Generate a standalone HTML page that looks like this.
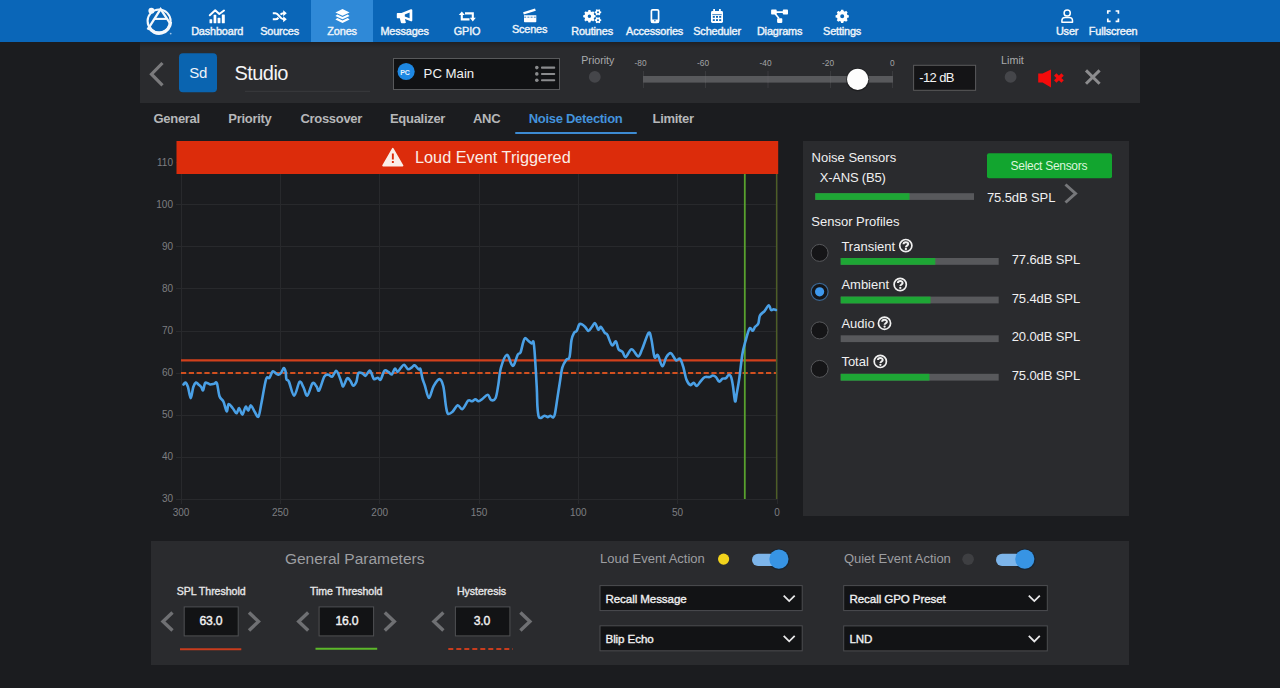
<!DOCTYPE html>
<html><head><meta charset="utf-8">
<style>
*{box-sizing:border-box;margin:0;padding:0}
html,body{width:1280px;height:688px;overflow:hidden;background:#1b1c1f;font-family:"Liberation Sans",sans-serif;color:#fff;position:relative}
.a{position:absolute}
#nav{left:0;top:0;width:1280px;height:42px;background:#0a66b8}
.nt{position:absolute;top:24.5px;width:80px;text-align:center;font-size:10.9px;line-height:13px;font-weight:normal;-webkit-text-stroke:0.4px #eef4fa;color:#eef4fa;letter-spacing:-0.15px;white-space:nowrap}
#hdr{left:140px;top:42px;width:1000px;height:61px;background:linear-gradient(#1f2023 0px,#25262a 3px,#2a2b2e 6px,#2a2b2e 100%)}
.tab{position:absolute;top:111px;font-size:13px;line-height:15px;font-weight:bold;color:#b6b7b9;white-space:nowrap;letter-spacing:-0.3px}
#rp{left:803px;top:141px;width:326px;height:375px;background:#2a2b2e}
#bp{left:151px;top:541px;width:978px;height:124px;background:#2a2b2e}
.rt{position:absolute;font-size:13px;line-height:15px;color:#f0f0f1;white-space:nowrap}
.bt{position:absolute;top:585px;font-size:10.6px;line-height:12px;font-weight:normal;-webkit-text-stroke:0.35px #e6e6e7;color:#e6e6e7;white-space:nowrap;letter-spacing:-0.05px}
.bv{position:absolute;top:614.2px;font-size:12.2px;line-height:14px;font-weight:normal;-webkit-text-stroke:0.4px #f2f2f3;color:#f2f2f3;white-space:nowrap;letter-spacing:-0.25px}
.st{position:absolute;font-size:11.6px;line-height:14px;font-weight:normal;-webkit-text-stroke:0.35px #f0f0f1;color:#f0f0f1;white-space:nowrap;letter-spacing:-0.1px}
</style></head><body>
<div id="nav" class="a">
<div class="a" style="left:310.6px;top:0;width:62.5px;height:42px;background:#2f89d7"></div>
<svg class="a" style="left:0;top:0" width="1280" height="42" viewBox="0 0 1280 42" fill="#fff" stroke="none">
 <!-- logo -->
 <g fill="none" stroke="#f4f8fc">
  <circle cx="159.1" cy="21" r="11.5" stroke-width="2.1"/>
  <path d="M149 27 A11.3 11.3 0 0 0 170.4 22" stroke-width="3.4"/>
  <path d="M147.6 29.6 L160.6 9.2 L170.4 23.8" stroke-width="2.3"/>
  <path d="M154.6 18.9 H166.6" stroke-width="2.1"/>
 </g>
 <circle cx="151.4" cy="10.8" r="3" fill="#f4f8fc"/>
 <circle cx="170.7" cy="33.6" r="0.9" fill="#9cc3ea"/>
 <!-- dashboard -->
 <path d="M209.8 15.2 L215.2 10.2 L219.3 14 L224 10.5" fill="none" stroke="#fff" stroke-width="2" stroke-linecap="round" stroke-linejoin="round"/>
 <rect x="209.5" y="19.2" width="2.7" height="4.1" rx="0.6"/>
 <rect x="213.6" y="14.8" width="2.7" height="8.5" rx="0.6"/>
 <rect x="217.6" y="17.8" width="2.8" height="5.5" rx="0.6"/>
 <rect x="221.8" y="14.5" width="3" height="8.8" rx="0.6"/>
 <!-- sources shuffle -->
 <g fill="none" stroke="#fff" stroke-width="2.1">
  <path d="M272.8 13.2 H275.4 C277.4 13.2 278 14.5 279.5 16.4 C281 18.3 281.8 19.3 283.6 19.3 H284.5"/>
  <path d="M272.8 19.3 H275.4 C277.2 19.3 277.8 18.5 278.4 17.6 M280.6 14.6 C281.2 13.7 282 13.2 283.6 13.2 H284.5"/>
 </g>
 <path d="M283.2 10.2 L286.8 13.2 L283.2 16.2Z M283.2 16.3 L286.8 19.3 L283.2 22.3Z"/>
 <!-- zones layers -->
 <path d="M342.5 9 L349.6 12.4 L342.5 15.8 L335.4 12.4Z"/>
 <path d="M337.3 14.6 L342.5 17.1 L347.7 14.6 L349.6 15.9 L342.5 19.3 L335.4 15.9Z"/>
 <path d="M337.3 18.1 L342.5 20.6 L347.7 18.1 L349.6 19.5 L342.5 22.9 L335.4 19.5Z"/>
 <!-- messages bullhorn -->
 <path d="M397 13 H401.5 L410.8 9.2 C411.6 9 412.3 9.3 412.3 10 V20.6 C412.3 21.3 411.6 21.6 410.8 21.3 L405 19 V19.2 L405.8 22.3 C406 23 405.4 23.2 404.8 23.2 H401.8 C401.3 23.2 401 22.9 400.9 22.4 L399.8 18.2 H397.6 C397 18.2 396.8 17.7 396.8 17.2 V13.8 C396.8 13.3 397 13 397.6 13Z M404.8 14.4 V16.6 L409.6 18.2 V12.6Z"/>
 <!-- gpio retweet -->
 <g fill="none" stroke="#fff" stroke-width="2.1">
  <path d="M461.8 14 V19.4 H469.5"/>
  <path d="M472.8 18.8 V13.4 H465"/>
 </g>
 <path d="M458.8 15 L461.8 11.4 L464.8 15Z M469.8 17.8 L472.8 21.6 L475.8 17.8Z"/>
 <!-- scenes clapper -->
 <path d="M524 15.3 H536.3 V21.4 C536.3 21.9 536 22.2 535.5 22.2 H524.8 C524.3 22.2 524 21.9 524 21.4Z"/>
 <path d="M524.2 17.2 H536.1" stroke="#0a66b8" stroke-width="0.8" stroke-dasharray="2 1.2"/>
 <path d="M523.1 12.2 L535 8.6 L535.8 10.8 L523.8 14.4Z"/>
 <!-- routines cogs -->
 <path fill-rule="evenodd" d="M594.23 15.02 L595.61 15.27 L595.61 17.33 L594.23 17.58 L593.72 18.81 L594.53 19.96 L593.06 21.43 L591.91 20.62 L590.68 21.13 L590.43 22.51 L588.37 22.51 L588.12 21.13 L586.89 20.62 L585.74 21.43 L584.27 19.96 L585.08 18.81 L584.57 17.58 L583.19 17.33 L583.19 15.27 L584.57 15.02 L585.08 13.79 L584.27 12.64 L585.74 11.17 L586.89 11.98 L588.12 11.47 L588.37 10.09 L590.43 10.09 L590.68 11.47 L591.91 11.98 L593.06 11.17 L594.53 12.64 L593.72 13.79Z M591.10 16.30 A1.7 1.7 0 1 0 587.70 16.30 A1.7 1.7 0 1 0 591.10 16.30Z"/>
 <path fill-rule="evenodd" d="M600.45 11.42 L601.22 11.58 L601.22 13.02 L600.45 13.18 L599.99 13.98 L600.23 14.73 L598.99 15.45 L598.46 14.86 L597.54 14.86 L597.01 15.45 L595.77 14.73 L596.01 13.98 L595.55 13.18 L594.78 13.02 L594.78 11.58 L595.55 11.42 L596.01 10.62 L595.77 9.87 L597.01 9.15 L597.54 9.74 L598.46 9.74 L598.99 9.15 L600.23 9.87 L599.99 10.62Z M599.00 12.30 A1.0 1.0 0 1 0 597.00 12.30 A1.0 1.0 0 1 0 599.00 12.30Z"/>
 <path fill-rule="evenodd" d="M600.45 19.32 L601.22 19.48 L601.22 20.92 L600.45 21.08 L599.99 21.88 L600.23 22.63 L598.99 23.35 L598.46 22.76 L597.54 22.76 L597.01 23.35 L595.77 22.63 L596.01 21.88 L595.55 21.08 L594.78 20.92 L594.78 19.48 L595.55 19.32 L596.01 18.52 L595.77 17.77 L597.01 17.05 L597.54 17.64 L598.46 17.64 L598.99 17.05 L600.23 17.77 L599.99 18.52Z M599.00 20.20 A1.0 1.0 0 1 0 597.00 20.20 A1.0 1.0 0 1 0 599.00 20.20Z"/>
 <!-- accessories mobile -->
 <rect x="651.4" y="9.8" width="7.2" height="12.6" rx="1.3" fill="none" stroke="#fff" stroke-width="1.7"/>
 <rect x="651" y="19.4" width="8" height="3.6" rx="1"/>
 <circle cx="654.9" cy="20.8" r="0.8" fill="#0a66b8"/>
 <!-- scheduler calendar -->
 <rect x="711" y="11" width="12" height="12" rx="1.4"/>
 <rect x="713.2" y="9" width="1.8" height="3"/>
 <rect x="719" y="9" width="1.8" height="3"/>
 <g fill="#0a66b8">
  <rect x="712.3" y="14.3" width="9.4" height="0.8"/>
  <rect x="712.8" y="16" width="2" height="1.8"/><rect x="716" y="16" width="2" height="1.8"/><rect x="719.2" y="16" width="2" height="1.8"/>
  <rect x="712.8" y="19.2" width="2" height="1.8"/><rect x="716" y="19.2" width="2" height="1.8"/><rect x="719.2" y="19.2" width="2" height="1.8"/>
 </g>
 <!-- diagrams -->
 <rect x="771.1" y="9.6" width="5.6" height="4.9" rx="0.8"/>
 <rect x="782.8" y="9.6" width="5.2" height="4.9" rx="0.8"/>
 <rect x="777.1" y="18.2" width="5.2" height="4.7" rx="0.8"/>
 <path d="M776 12.1 H783.5 M775.2 13.8 L779 18.6" stroke="#fff" stroke-width="1.6" fill="none"/>
 <!-- settings cog -->
 <path fill-rule="evenodd" d="M847.42 14.92 L848.81 15.20 L848.81 17.40 L847.42 17.68 L846.87 19.01 L847.65 20.20 L846.10 21.75 L844.91 20.97 L843.58 21.52 L843.30 22.91 L841.10 22.91 L840.82 21.52 L839.49 20.97 L838.30 21.75 L836.75 20.20 L837.53 19.01 L836.98 17.68 L835.59 17.40 L835.59 15.20 L836.98 14.92 L837.53 13.59 L836.75 12.40 L838.30 10.85 L839.49 11.63 L840.82 11.08 L841.10 9.69 L843.30 9.69 L843.58 11.08 L844.91 11.63 L846.10 10.85 L847.65 12.40 L846.87 13.59Z M844.20 16.30 A2.0 2.0 0 1 0 840.20 16.30 A2.0 2.0 0 1 0 844.20 16.30Z"/>
 <!-- user -->
 <circle cx="1067.2" cy="13" r="3.1" fill="none" stroke="#fff" stroke-width="1.5"/>
 <path d="M1061.9 22.2 V20.8 C1061.9 18.8 1063.3 17.6 1065.2 17.6 H1069.2 C1071.1 17.6 1072.5 18.8 1072.5 20.8 V22.2Z" fill="none" stroke="#fff" stroke-width="1.5" stroke-linejoin="round"/>
 <!-- fullscreen -->
 <path d="M1107.8 13.8 V11 H1110.6 M1115.6 11 H1118.4 V13.8 M1118.4 18.6 V21.4 H1115.6 M1110.6 21.4 H1107.8 V18.6" fill="none" stroke="#fff" stroke-width="1.7"/>
</svg>
<div class="nt" style="left:177.1px">Dashboard</div>
<div class="nt" style="left:239.6px">Sources</div>
<div class="nt" style="left:302.1px">Zones</div>
<div class="nt" style="left:364.6px">Messages</div>
<div class="nt" style="left:427.1px">GPIO</div>
<div class="nt" style="left:489.6px;top:23px">Scenes</div>
<div class="nt" style="left:552.1px">Routines</div>
<div class="nt" style="left:614.6px">Accessories</div>
<div class="nt" style="left:677.1px">Scheduler</div>
<div class="nt" style="left:739.6px">Diagrams</div>
<div class="nt" style="left:802.1px">Settings</div>
<div class="nt" style="left:1027.1px">User</div>
<div class="nt" style="left:1073.1px">Fullscreen</div>
</div>


<div id="hdr" class="a"></div>
<svg class="a" style="left:0;top:42px" width="1280" height="62" viewBox="0 42 1280 62">
 <path d="M162.5 63 L151.5 74.2 L162.5 85.3" fill="none" stroke="#7a7a7c" stroke-width="3.2"/>
 <rect x="179" y="53.2" width="38" height="39" rx="4" fill="#0a64b0"/>
 <path d="M245 91.3 H370" stroke="#3a3b3e" stroke-width="1"/>
 <rect x="393.5" y="58.5" width="166" height="31" fill="#111214" stroke="#58595b" stroke-width="1"/>
 <circle cx="406.1" cy="71.5" r="8.6" fill="#1e88e3"/>
 <g fill="#8a8b8d">
  <circle cx="536.8" cy="67.6" r="1.8"/><circle cx="536.8" cy="73.9" r="1.8"/><circle cx="536.8" cy="80.2" r="1.8"/>
  <rect x="541" y="66.6" width="14.2" height="2.1" rx="0.8"/><rect x="541" y="72.9" width="14.2" height="2.1" rx="0.8"/><rect x="541" y="79.2" width="14.2" height="2.1" rx="0.8"/>
 </g>
 <circle cx="594.8" cy="76.9" r="5.9" fill="#45464a"/>
 <g stroke="#3a3b3e" stroke-width="1"><path d="M643.5 71 V88 M705.5 71 V88 M768 71 V88 M830.5 71 V88 M892.5 71 V88"/></g>
 <rect x="643" y="76" width="250" height="6.6" fill="#58595c"/>
 <g stroke="#626366" stroke-width="1" opacity="0.6"><path d="M705.5 76 V82.6 M768 76 V82.6 M830.5 76 V82.6"/></g>
 <circle cx="857.7" cy="79.6" r="11.6" fill="#141416" opacity="0.55"/>
 <circle cx="857.7" cy="79.3" r="10.6" fill="#fdfdfd"/>
 <g fill="#a3a4a6" font-family="Liberation Sans" font-size="8.3">
  <text x="640.5" y="66.3" text-anchor="middle">-80</text>
  <text x="703" y="66.3" text-anchor="middle">-60</text>
  <text x="765.5" y="66.3" text-anchor="middle">-40</text>
  <text x="828" y="66.3" text-anchor="middle">-20</text>
  <text x="892.2" y="66.3" text-anchor="middle">0</text>
 </g>
 <rect x="913.6" y="65.3" width="62" height="25" fill="#141416" stroke="#5a5a5c" stroke-width="1"/>
 <circle cx="1010.6" cy="76.9" r="5.9" fill="#45464a"/>
 <path d="M1038.2 73.4 H1042.6 L1051 69.4 V87.5 L1042.6 82.5 H1038.2 Z" fill="#f40b0b"/>
 <path d="M1055.2 74.6 L1062.6 81.6 M1062.6 74.6 L1055.2 81.6" stroke="#f40b0b" stroke-width="3.4"/>
 <path d="M1086 70.4 L1099.6 83.8 M1099.6 70.4 L1086 83.8" stroke="#8c8c8e" stroke-width="3"/>
</svg>
<div class="a" style="left:189.3px;top:64px;font-size:15px;line-height:17px;color:#eef3f8;white-space:nowrap;letter-spacing:-0.2px">Sd</div>
<div class="a" style="left:234.5px;top:62px;font-size:20px;line-height:22px;color:#f4f4f5;white-space:nowrap;letter-spacing:-0.55px">Studio</div>
<div class="a" style="left:400.3px;top:68.5px;width:11.6px;font-size:7px;line-height:8px;font-weight:bold;color:#e6f2fc;white-space:nowrap;letter-spacing:-0.3px">PC</div>
<div class="a" style="left:423.6px;top:65.7px;font-size:13.2px;line-height:15px;color:#f2f2f3;white-space:nowrap">PC Main</div>
<div class="a" style="left:581.3px;top:54.2px;font-size:10.6px;line-height:12px;color:#a9aaac;white-space:nowrap">Priority</div>
<div class="a" style="left:1001px;top:54.2px;font-size:10.8px;line-height:12px;color:#a9aaac;white-space:nowrap">Limit</div>
<div class="a" style="left:919.2px;top:70.6px;font-size:13px;line-height:14px;color:#f4f4f5;white-space:nowrap;letter-spacing:-0.6px">-12 dB</div>


<div class="tab" style="left:153.5px">General</div>
<div class="tab" style="left:228.3px">Priority</div>
<div class="tab" style="left:300.4px">Crossover</div>
<div class="tab" style="left:390px">Equalizer</div>
<div class="tab" style="left:473px">ANC</div>
<div class="tab" style="left:528.7px;color:#4393dc">Noise Detection</div>
<div class="tab" style="left:652.5px">Limiter</div>
<div class="a" style="left:515px;top:132px;width:122px;height:2.4px;background:#3d8bd3;border-radius:1px"></div>


<svg class="a" style="left:0;top:0" width="1280" height="688" viewBox="0 0 1280 688">
 <g stroke="#28292c" stroke-width="1" fill="none" shape-rendering="crispEdges"><path d="M176 499.2 H777" /><path d="M176 457.1 H777" /><path d="M176 415.1 H777" /><path d="M176 373.0 H777" /><path d="M176 331.0 H777" /><path d="M176 288.9 H777" /><path d="M176 246.8 H777" /><path d="M176 204.8 H777" /><path d="M176 162.7 H777" /><path d="M181.0 141 V504" /><path d="M280.3 141 V504" /><path d="M379.7 141 V504" /><path d="M479.0 141 V504" /><path d="M578.3 141 V504" /><path d="M677.6 141 V504" /><path d="M777.0 141 V504" /></g>
 <g fill="#7d7e81" font-family="Liberation Sans" font-size="10"><text x="173" y="502.2" text-anchor="end">30</text><text x="173" y="460.1" text-anchor="end">40</text><text x="173" y="418.1" text-anchor="end">50</text><text x="173" y="376.0" text-anchor="end">60</text><text x="173" y="334.0" text-anchor="end">70</text><text x="173" y="291.9" text-anchor="end">80</text><text x="173" y="249.8" text-anchor="end">90</text><text x="173" y="207.8" text-anchor="end">100</text><text x="173" y="165.7" text-anchor="end">110</text><text x="181.0" y="516" text-anchor="middle">300</text><text x="280.3" y="516" text-anchor="middle">250</text><text x="379.7" y="516" text-anchor="middle">200</text><text x="479.0" y="516" text-anchor="middle">150</text><text x="578.3" y="516" text-anchor="middle">100</text><text x="677.6" y="516" text-anchor="middle">50</text><text x="777.0" y="516" text-anchor="middle">0</text></g>
 <path d="M181 360.4 H777" stroke="#d2401c" stroke-width="2.2"/>
 <path d="M181 373 H777" stroke="#d2501f" stroke-width="2" stroke-dasharray="5.2 2.6"/>
 <path d="M744.8 174 V499" stroke="#58a12e" stroke-width="1.8"/>
 <path d="M776.6 174 V499" stroke="#4d5e26" stroke-width="1.4"/>
 <path d="M183.50 384.50 C183.83 384.17 184.75 382.08 185.50 382.50 C186.25 382.92 187.13 384.38 188.00 387.00 C188.87 389.62 189.82 398.20 190.70 398.20 C191.58 398.20 192.42 389.62 193.30 387.00 C194.18 384.38 195.13 382.92 196.00 382.50 C196.87 382.08 197.63 383.75 198.50 384.50 C199.37 385.25 200.43 386.02 201.20 387.00 C201.97 387.98 202.47 391.03 203.10 390.40 C203.73 389.77 204.23 384.40 205.00 383.20 C205.77 382.00 206.82 382.98 207.70 383.20 C208.58 383.42 209.22 384.40 210.30 384.50 C211.38 384.60 213.10 384.02 214.20 383.80 C215.30 383.58 216.02 381.13 216.90 383.20 C217.78 385.27 218.42 393.15 219.50 396.20 C220.58 399.25 222.20 398.98 223.40 401.50 C224.60 404.02 225.83 410.87 226.70 411.30 C227.57 411.73 227.62 404.65 228.60 404.10 C229.58 403.55 231.28 406.47 232.60 408.00 C233.92 409.53 235.42 413.30 236.50 413.30 C237.58 413.30 238.12 407.78 239.10 408.00 C240.08 408.22 241.32 414.82 242.40 414.60 C243.48 414.38 244.62 407.37 245.60 406.70 C246.58 406.03 247.42 410.82 248.30 410.60 C249.18 410.38 249.82 405.17 250.90 405.40 C251.98 405.63 253.53 410.15 254.80 412.00 C256.07 413.85 257.38 418.03 258.50 416.50 C259.62 414.97 260.23 409.02 261.50 402.80 C262.77 396.58 264.78 383.35 266.10 379.20 C267.42 375.05 268.30 379.20 269.40 377.90 C270.50 376.60 271.62 372.15 272.70 371.40 C273.78 370.65 274.93 372.85 275.90 373.40 C276.87 373.95 277.62 374.82 278.50 374.70 C279.38 374.58 280.32 373.80 281.20 372.70 C282.08 371.60 283.05 368.22 283.80 368.10 C284.55 367.98 285.27 370.15 285.70 372.00 C286.13 373.85 285.85 377.55 286.40 379.20 C286.95 380.85 287.70 379.17 289.00 381.90 C290.30 384.63 292.45 395.60 294.20 395.60 C295.95 395.60 297.97 383.32 299.50 381.90 C301.03 380.48 302.10 384.82 303.40 387.10 C304.70 389.38 305.77 396.25 307.30 395.60 C308.83 394.95 311.07 384.73 312.60 383.20 C314.13 381.67 315.42 385.20 316.50 386.40 C317.58 387.60 317.80 392.03 319.10 390.40 C320.40 388.77 322.77 379.22 324.30 376.60 C325.83 373.98 326.98 374.70 328.30 374.70 C329.62 374.70 330.90 377.27 332.20 376.60 C333.50 375.93 335.02 371.02 336.10 370.70 C337.18 370.38 337.83 372.83 338.70 374.70 C339.57 376.57 340.53 379.97 341.30 381.90 C342.07 383.83 342.32 386.88 343.30 386.30 C344.28 385.72 346.00 379.28 347.20 378.40 C348.40 377.52 349.52 379.80 350.50 381.00 C351.48 382.20 352.12 385.48 353.10 385.60 C354.08 385.72 355.53 383.77 356.40 381.70 C357.27 379.63 357.33 374.62 358.30 373.20 C359.27 371.78 361.00 372.77 362.20 373.20 C363.40 373.63 364.30 376.23 365.50 375.80 C366.70 375.37 368.42 371.03 369.40 370.60 C370.38 370.17 370.63 371.78 371.40 373.20 C372.17 374.62 372.92 378.35 374.00 379.10 C375.08 379.85 376.80 377.60 377.90 377.70 C379.00 377.80 379.50 380.88 380.60 379.70 C381.70 378.52 383.20 371.90 384.50 370.60 C385.80 369.30 387.20 371.25 388.40 371.90 C389.60 372.55 390.62 375.05 391.70 374.50 C392.78 373.95 393.92 369.03 394.90 368.60 C395.88 368.17 396.62 372.02 397.60 371.90 C398.58 371.78 399.72 369.10 400.80 367.90 C401.88 366.70 402.90 364.48 404.10 364.70 C405.30 364.92 406.70 368.77 408.00 369.20 C409.30 369.63 410.80 367.95 411.90 367.30 C413.00 366.65 413.50 364.98 414.60 365.30 C415.70 365.62 417.52 368.55 418.50 369.20 C419.48 369.85 419.85 367.67 420.50 369.20 C421.15 370.73 421.65 375.60 422.40 378.40 C423.15 381.20 423.92 382.73 425.00 386.00 C426.08 389.27 427.48 397.95 428.90 398.00 C430.32 398.05 431.75 389.45 433.50 386.30 C435.25 383.15 437.77 379.10 439.40 379.10 C441.03 379.10 442.22 381.83 443.30 386.30 C444.38 390.77 445.13 401.33 445.90 405.90 C446.67 410.47 446.80 412.72 447.90 413.70 C449.00 414.68 450.87 413.22 452.50 411.80 C454.13 410.38 456.07 405.65 457.70 405.20 C459.33 404.75 460.55 409.87 462.30 409.10 C464.05 408.33 466.57 401.90 468.20 400.60 C469.83 399.30 470.90 401.52 472.10 401.30 C473.30 401.08 474.32 399.30 475.40 399.30 C476.48 399.30 477.40 401.40 478.60 401.30 C479.80 401.20 481.07 399.78 482.60 398.70 C484.13 397.62 486.38 394.58 487.80 394.80 C489.22 395.02 489.80 399.47 491.10 400.00 C492.40 400.53 494.40 400.52 495.60 398.00 C496.80 395.48 497.42 389.92 498.30 384.90 C499.18 379.88 499.48 372.90 500.90 367.90 C502.32 362.90 505.07 355.55 506.80 354.90 C508.53 354.25 510.12 362.32 511.30 364.00 C512.48 365.68 512.82 366.58 513.90 365.00 C514.98 363.42 516.70 356.58 517.80 354.50 C518.90 352.42 519.62 354.47 520.50 352.50 C521.38 350.53 522.35 345.10 523.10 342.70 C523.85 340.30 524.13 338.43 525.00 338.10 C525.87 337.77 527.20 339.82 528.30 340.70 C529.40 341.58 530.73 343.18 531.60 343.40 C532.47 343.62 532.95 339.93 533.50 342.00 C534.05 344.07 534.35 348.05 534.90 355.80 C535.45 363.55 536.38 380.10 536.80 388.50 C537.22 396.90 537.08 401.52 537.40 406.20 C537.72 410.88 538.12 414.65 538.70 416.60 C539.28 418.55 539.95 418.05 540.90 417.90 C541.85 417.75 543.23 415.83 544.40 415.70 C545.57 415.57 546.88 417.10 547.90 417.10 C548.92 417.10 549.63 415.63 550.50 415.70 C551.37 415.77 552.37 417.78 553.10 417.50 C553.83 417.22 554.17 417.35 554.90 414.00 C555.63 410.65 556.70 402.52 557.50 397.40 C558.30 392.28 558.90 388.27 559.70 383.30 C560.50 378.33 561.20 371.53 562.30 367.60 C563.40 363.67 565.10 361.45 566.30 359.70 C567.50 357.95 568.63 360.37 569.50 357.10 C570.37 353.83 570.73 344.13 571.50 340.10 C572.27 336.07 573.23 334.43 574.10 332.90 C574.97 331.37 575.83 332.32 576.70 330.90 C577.57 329.48 578.42 325.48 579.30 324.40 C580.18 323.32 581.02 323.97 582.00 324.40 C582.98 324.83 584.12 325.92 585.20 327.00 C586.28 328.08 587.40 330.90 588.50 330.90 C589.60 330.90 590.72 328.30 591.80 327.00 C592.88 325.70 593.92 322.67 595.00 323.10 C596.08 323.53 597.32 328.95 598.30 329.60 C599.28 330.25 599.82 326.45 600.90 327.00 C601.98 327.55 603.72 331.58 604.80 332.90 C605.88 334.22 606.20 332.83 607.40 334.90 C608.60 336.97 610.58 344.22 612.00 345.30 C613.42 346.38 614.82 340.75 615.90 341.40 C616.98 342.05 617.40 347.45 618.50 349.20 C619.60 350.95 621.30 350.58 622.50 351.90 C623.70 353.22 624.18 357.55 625.70 357.10 C627.22 356.65 629.52 349.32 631.60 349.20 C633.68 349.08 636.45 356.40 638.20 356.40 C639.95 356.40 640.37 353.12 642.10 349.20 C643.83 345.28 647.07 334.63 648.60 332.90 C650.13 331.17 650.32 334.77 651.30 338.80 C652.28 342.83 653.42 354.38 654.50 357.10 C655.58 359.82 656.48 353.57 657.80 355.10 C659.12 356.63 660.98 365.97 662.40 366.30 C663.82 366.63 664.88 359.28 666.30 357.10 C667.72 354.92 669.27 352.65 670.90 353.20 C672.53 353.75 674.58 359.48 676.10 360.40 C677.62 361.32 678.82 357.65 680.00 358.70 C681.18 359.75 682.13 363.23 683.20 366.70 C684.27 370.17 685.20 376.43 686.40 379.50 C687.60 382.57 689.20 384.57 690.40 385.10 C691.60 385.63 692.53 382.57 693.60 382.70 C694.67 382.83 695.60 386.17 696.80 385.90 C698.00 385.63 699.47 382.57 700.80 381.10 C702.13 379.63 703.33 377.77 704.80 377.10 C706.27 376.43 708.27 377.37 709.60 377.10 C710.93 376.83 711.73 375.50 712.80 375.50 C713.87 375.50 714.95 376.08 716.00 377.10 C717.05 378.12 718.00 381.33 719.10 381.60 C720.20 381.87 721.45 379.28 722.60 378.70 C723.75 378.12 724.93 378.77 726.00 378.10 C727.07 377.43 728.12 374.78 729.00 374.70 C729.88 374.62 730.63 375.67 731.30 377.60 C731.97 379.53 732.37 382.33 733.00 386.30 C733.63 390.27 734.47 400.23 735.10 401.40 C735.73 402.57 736.08 397.27 736.80 393.30 C737.52 389.33 738.47 384.15 739.40 377.60 C740.33 371.05 741.38 360.07 742.40 354.00 C743.42 347.93 744.32 345.47 745.50 341.20 C746.68 336.93 748.30 330.13 749.50 328.40 C750.70 326.67 751.77 331.07 752.70 330.80 C753.63 330.53 754.17 328.00 755.10 326.80 C756.03 325.60 757.50 325.47 758.30 323.60 C759.10 321.73 758.83 317.73 759.90 315.60 C760.97 313.47 763.23 312.53 764.70 310.80 C766.17 309.07 767.63 305.33 768.70 305.20 C769.77 305.07 770.30 309.33 771.10 310.00 C771.90 310.67 772.70 309.20 773.50 309.20 C774.30 309.20 775.50 309.87 775.90 310.00" fill="none" stroke="#4aa0e6" stroke-width="2.6" stroke-linejoin="round" stroke-linecap="round"/>
 <rect x="176.5" y="141" width="601.7" height="33" fill="#dc2c0b"/>
 <path d="M392.8 148.6 L402.6 165.6 H383 Z" fill="#fbeee8" stroke="#fbeee8" stroke-width="1.6" stroke-linejoin="round"/>
 <rect x="391.9" y="153.5" width="1.9" height="6" fill="#dc2c0b"/>
 <rect x="391.9" y="161" width="1.9" height="2" fill="#dc2c0b"/>
</svg>
<div class="a" style="left:415px;top:148.1px;font-size:16.3px;line-height:18px;color:#fbece6;white-space:nowrap">Loud Event Triggered</div>


<div id="rp" class="a"></div>
<svg class="a" style="left:0;top:0" width="1280" height="688" viewBox="0 0 1280 688">
 <rect x="987" y="153.2" width="125" height="25" rx="2" fill="#12a52f"/>
 <rect x="815.3" y="193.2" width="158.7" height="6.7" fill="#58595c"/><rect x="815.3" y="193.2" width="94.2" height="6.7" fill="#1ea635"/>
 <path d="M1065.5 184.5 L1075.5 193.5 L1065.5 202.5" fill="none" stroke="#76777a" stroke-width="3"/>
 <rect x="840.7" y="258" width="158" height="6.8" fill="#58595c"/><rect x="840.7" y="258" width="94.6" height="6.8" fill="#1ea635"/>
 <rect x="840.7" y="296.6" width="158" height="6.8" fill="#58595c"/><rect x="840.7" y="296.6" width="89.8" height="6.8" fill="#1ea635"/>
 <rect x="840.7" y="335.3" width="158" height="6.8" fill="#58595c"/><rect x="840.7" y="335.3" width="0.0" height="6.8" fill="#1ea635"/>
 <rect x="840.7" y="373.8" width="158" height="6.8" fill="#58595c"/><rect x="840.7" y="373.8" width="88.7" height="6.8" fill="#1ea635"/>
 <circle cx="819.6" cy="252.9" r="8.5" fill="#151517" stroke="#56575a" stroke-width="1"/>
 <circle cx="819.6" cy="291.8" r="8.5" fill="#151517" stroke="#3a6590" stroke-width="1.2"/>
 <circle cx="819.6" cy="291.8" r="4.6" fill="#3e98ec"/>
 <circle cx="819.6" cy="330.4" r="8.5" fill="#151517" stroke="#56575a" stroke-width="1"/>
 <circle cx="819.6" cy="368.9" r="8.5" fill="#151517" stroke="#56575a" stroke-width="1"/>
 <circle cx="905.8" cy="245.6" r="6.1" fill="none" stroke="#f0f0f0" stroke-width="1.7"/><path d="M903.5 244.2 C903.5 241.5 908.2 241.5 908.2 244.1 C908.2 245.5 905.9 245.8 905.9 247.2" fill="none" stroke="#f0f0f0" stroke-width="2"/><circle cx="905.9" cy="249.0" r="1.15" fill="#f0f0f0"/>
 <circle cx="900.2" cy="284.5" r="6.1" fill="none" stroke="#f0f0f0" stroke-width="1.7"/><path d="M897.9 283.1 C897.9 280.4 902.6 280.4 902.6 283.0 C902.6 284.4 900.3 284.7 900.3 286.1" fill="none" stroke="#f0f0f0" stroke-width="2"/><circle cx="900.3" cy="287.9" r="1.15" fill="#f0f0f0"/>
 <circle cx="884.5" cy="323.2" r="6.1" fill="none" stroke="#f0f0f0" stroke-width="1.7"/><path d="M882.2 321.8 C882.2 319.1 886.9 319.1 886.9 321.7 C886.9 323.1 884.6 323.4 884.6 324.8" fill="none" stroke="#f0f0f0" stroke-width="2"/><circle cx="884.6" cy="326.6" r="1.15" fill="#f0f0f0"/>
 <circle cx="880.3" cy="361.4" r="6.1" fill="none" stroke="#f0f0f0" stroke-width="1.7"/><path d="M878.0 360.0 C878.0 357.3 882.7 357.3 882.7 359.9 C882.7 361.3 880.4 361.6 880.4 363.0" fill="none" stroke="#f0f0f0" stroke-width="2"/><circle cx="880.4" cy="364.8" r="1.15" fill="#f0f0f0"/>
</svg>
<div class="rt" style="left:811.6px;top:150px">Noise Sensors</div>
<div class="rt" style="left:819.7px;top:169.8px;letter-spacing:-0.2px">X-ANS (B5)</div>
<div class="rt" style="left:1010.6px;top:158.5px;font-size:12px;color:#dcf5dc;letter-spacing:-0.3px">Select Sensors</div>
<div class="rt" style="left:986.9px;top:189.5px;letter-spacing:-0.1px">75.5dB SPL</div>
<div class="rt" style="left:811.3px;top:214px">Sensor Profiles</div>
<div class="rt" style="left:841.4px;top:238.5px">Transient</div>
<div class="rt" style="left:841.4px;top:277px">Ambient</div>
<div class="rt" style="left:841.4px;top:315.7px">Audio</div>
<div class="rt" style="left:841.4px;top:354.2px">Total</div>
<div class="rt" style="left:1011.7px;top:252.3px;letter-spacing:-0.1px">77.6dB SPL</div>
<div class="rt" style="left:1011.7px;top:290.5px;letter-spacing:-0.1px">75.4dB SPL</div>
<div class="rt" style="left:1011.7px;top:329.1px;letter-spacing:-0.1px">20.0dB SPL</div>
<div class="rt" style="left:1011.7px;top:367.5px;letter-spacing:-0.1px">75.0dB SPL</div>


<div id="bp" class="a"></div>
<svg class="a" style="left:0;top:0" width="1280" height="688" viewBox="0 0 1280 688">
 <path d="M172.5 612.5 L163.0 621.5 L172.5 630.5" fill="none" stroke="#6f7073" stroke-width="3.4"/><path d="M249.0 612.5 L258.5 621.5 L249.0 630.5" fill="none" stroke="#6f7073" stroke-width="3.4"/>
 <path d="M308.2 612.5 L298.7 621.5 L308.2 630.5" fill="none" stroke="#6f7073" stroke-width="3.4"/><path d="M384.8 612.5 L394.3 621.5 L384.8 630.5" fill="none" stroke="#6f7073" stroke-width="3.4"/>
 <path d="M443.4 612.5 L433.9 621.5 L443.4 630.5" fill="none" stroke="#6f7073" stroke-width="3.4"/><path d="M520.4 612.5 L529.9 621.5 L520.4 630.5" fill="none" stroke="#6f7073" stroke-width="3.4"/>
 <rect x="184.2" y="606.9" width="54" height="29" fill="#121315" stroke="#4f5053" stroke-width="1"/>
 <rect x="319.1" y="606.9" width="54.5" height="29" fill="#121315" stroke="#4f5053" stroke-width="1"/>
 <rect x="455.4" y="606.9" width="54.5" height="29" fill="#121315" stroke="#4f5053" stroke-width="1"/>
 <path d="M180 649.3 H241.3" stroke="#c83c1d" stroke-width="2"/>
 <path d="M315.5 648.8 H377.2" stroke="#5cb82a" stroke-width="2"/>
 <path d="M448.3 649 H512.8" stroke="#c83c1d" stroke-width="2" stroke-dasharray="5 3"/>
 <circle cx="723.6" cy="559.1" r="5.6" fill="#f2d31c"/>
 <circle cx="778.9" cy="559.4" r="10.7" fill="#0f2233" opacity="0.6"/>
 <rect x="752" y="553.8" width="28" height="12.3" rx="6.1" fill="#7db5ea"/>
 <circle cx="778.9" cy="559.1" r="9.6" fill="#3794e4"/>
 <circle cx="968.1" cy="559.2" r="5.8" fill="#3e3f42"/>
 <circle cx="1024.8" cy="559.4" r="10.7" fill="#0f2233" opacity="0.6"/>
 <rect x="996" y="553.8" width="28" height="12.3" rx="6.1" fill="#7db5ea"/>
 <circle cx="1024.8" cy="559.1" r="9.6" fill="#3794e4"/>
 <rect x="600.0" y="585.6" width="202.2" height="25" fill="#121315" stroke="#4d4e51" stroke-width="1"/><path d="M783.7 595.6 L789.2 601.1 L794.7 595.6" fill="none" stroke="#e8e8e9" stroke-width="1.8"/>
 <rect x="600.0" y="625.8" width="202.2" height="25" fill="#121315" stroke="#4d4e51" stroke-width="1"/><path d="M783.7 635.8 L789.2 641.3 L794.7 635.8" fill="none" stroke="#e8e8e9" stroke-width="1.8"/>
 <rect x="843.7" y="585.6" width="203.6" height="25" fill="#121315" stroke="#4d4e51" stroke-width="1"/><path d="M1028.8 595.6 L1034.3 601.1 L1039.8 595.6" fill="none" stroke="#e8e8e9" stroke-width="1.8"/>
 <rect x="843.7" y="625.9" width="203.6" height="25" fill="#121315" stroke="#4d4e51" stroke-width="1"/><path d="M1028.8 635.9 L1034.3 641.4 L1039.8 635.9" fill="none" stroke="#e8e8e9" stroke-width="1.8"/>
</svg>
<div class="a" style="left:284.9px;top:550px;font-size:15.5px;line-height:17px;color:#9d9ea1;white-space:nowrap">General Parameters</div>
<div class="bt" style="left:176.7px">SPL Threshold</div>
<div class="bt" style="left:310px">Time Threshold</div>
<div class="bt" style="left:457px">Hysteresis</div>
<div class="bv" style="left:199.6px">63.0</div>
<div class="bv" style="left:335.5px">16.0</div>
<div class="bv" style="left:473.8px">3.0</div>
<div class="a" style="left:600px;top:551px;font-size:13px;line-height:15px;color:#9d9ea1;white-space:nowrap">Loud Event Action</div>
<div class="a" style="left:843.9px;top:551px;font-size:13px;line-height:15px;color:#9d9ea1;white-space:nowrap">Quiet Event Action</div>
<div class="st" style="left:605.5px;top:591.5px">Recall Message</div>
<div class="st" style="left:605.5px;top:631.5px">Blip Echo</div>
<div class="st" style="left:849.5px;top:591.5px">Recall GPO Preset</div>
<div class="st" style="left:849.5px;top:631.5px">LND</div>

</body></html>
